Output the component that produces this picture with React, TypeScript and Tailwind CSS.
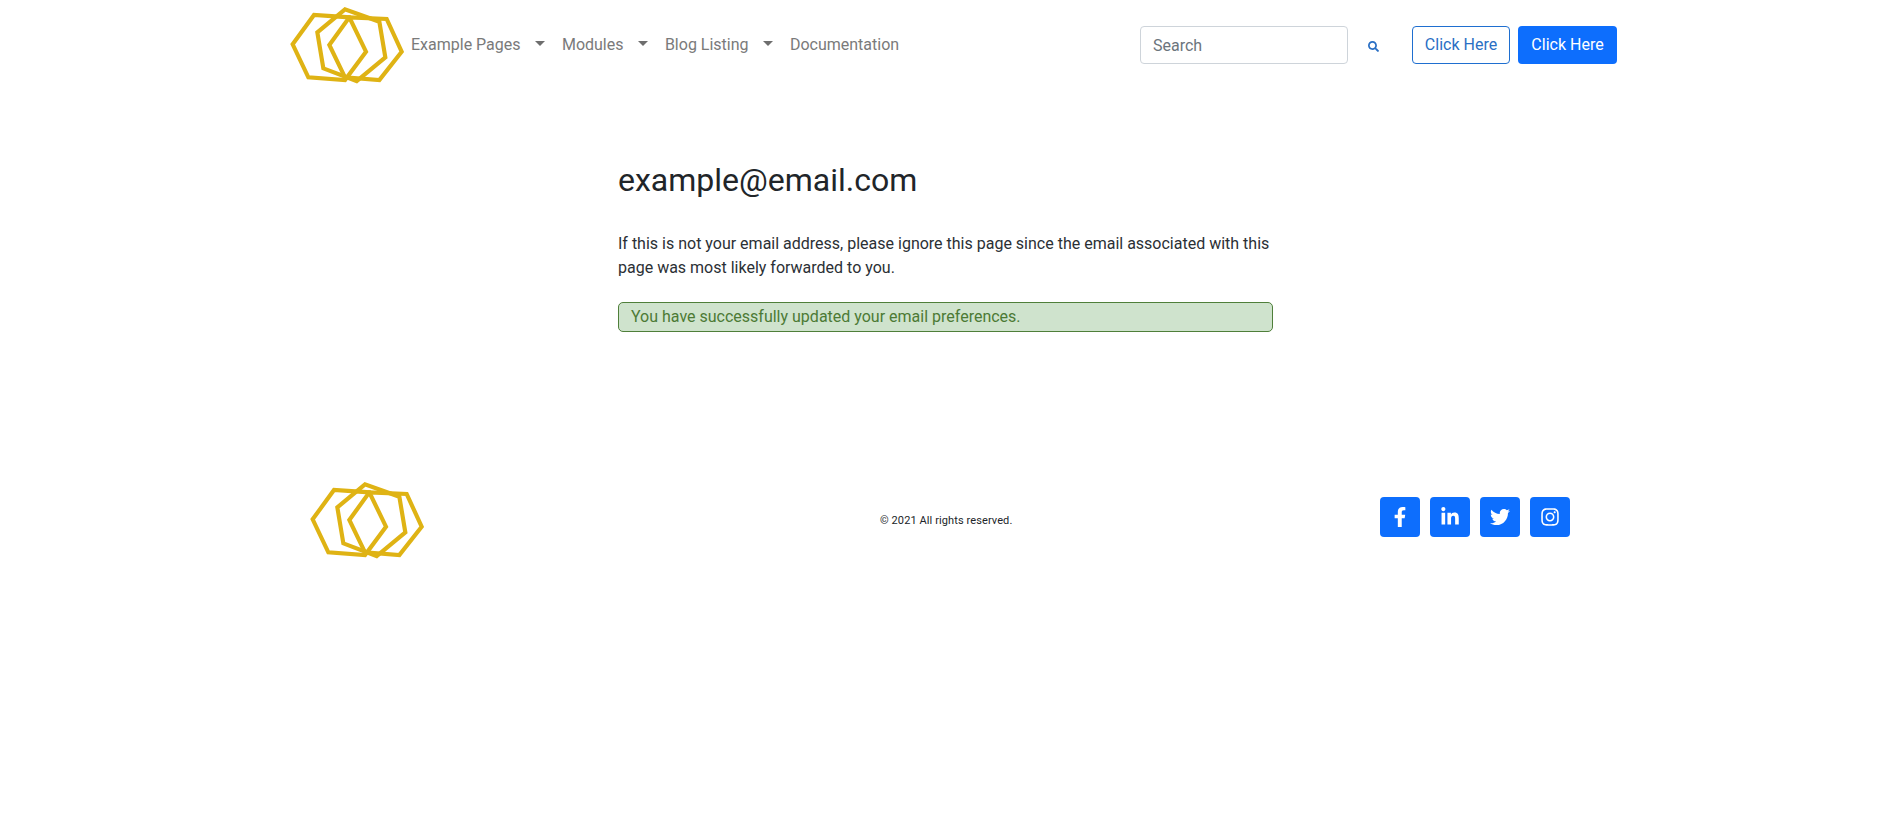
import { FaFacebookF, FaLinkedinIn, FaTwitter, FaInstagram, FaSearch } from 'react-icons/fa'

function Logo() {
  return (
    <svg width="130" height="90" viewBox="0 0 390 270" fill="none" stroke="#dfb314" strokeWidth="12.5" strokeLinejoin="miter" className="shrink-0">
      <polygon points="38,133 102,45 208,52 258,155 195,240 85,232" />
      <polygon points="112,97 195,28 298,65 316,172 230,243 130,205" />
      <polygon points="148,135 208,52 320,57 365,155 298,240 195,232" />
    </svg>
  )
}

function NavItem({ label, caret }: { label: string; caret?: boolean }) {
  return (
    <a href="#" className="flex items-center text-[16px] leading-6 text-[#7a7a7a]">
      {label}
      {caret && <span className="ml-[14px] mr-[17.4px] mb-[3px] w-0 h-0 border-x-[5px] border-x-transparent border-t-[5px] border-t-[#6e6e6e]" />}
    </a>
  )
}

const socials = [FaFacebookF, FaLinkedinIn, FaTwitter, FaInstagram]

export default function App() {
  return (
    <div className="min-h-[833px] bg-white text-[#212529] font-['Roboto',sans-serif]">
      <header className="flex items-center h-[90px] pl-[280px] pr-[277px]">
        <Logo />
        <nav className="flex items-center ml-px">
          <NavItem label="Example Pages" caret />
          <NavItem label="Modules" caret />
          <NavItem label="Blog Listing" caret />
          <NavItem label="Documentation" />
        </nav>
        <div className="ml-auto flex items-center">
          <input
            placeholder="Search"
            className="w-[208px] h-[38px] px-3 text-[16px] border border-[#ced4da] rounded bg-white placeholder:text-[#6c757d] outline-none"
          />
          <button className="w-[64px] h-[38px] flex items-center pl-[20px] text-[#2a6fc4]">
            <FaSearch className="w-[11px] h-[11px] mt-[2px]" />
          </button>
          <button className="w-[98px] h-[38px] border border-[#1f6fd0] rounded text-[16px] text-[#2a6fc4] bg-white">Click Here</button>
          <button className="w-[99px] h-[38px] ml-2 rounded text-[16px] text-white bg-[#0d6efd]">Click Here</button>
        </div>
      </header>

      <main className="w-[655px] ml-[618px] pt-[71px] h-[385px]">
        <h1 className="text-[32px] leading-[38px] font-normal">example@email.com</h1>
        <p className="mt-[33px] text-[16px] leading-6 text-[#2b3035]">
          If this is not your email address, please ignore this page since the email associated with this page was most likely forwarded to you.
        </p>
        <div className="mt-[22px] h-[30px] px-3 flex items-center text-[16px] text-[#4c7a35] bg-[#cfe3cd] border border-[#4f7f3a] rounded-[5px]">
          You have successfully updated your email preferences.
        </div>
      </main>

      <footer className="flex items-start pl-[300px]">
        <Logo />
        <p className="ml-[450px] mt-[38px] w-[140px] text-[11px] leading-[15px] tracking-[0.1px] text-[#212529] whitespace-nowrap">© 2021 All rights reserved.</p>
        <div className="ml-[360px] mt-[22px] flex gap-[10px]">
          {socials.map((Icon, i) => (
            <a key={i} href="#" className="w-10 h-10 rounded flex items-center justify-center bg-[#0d6efd] text-white">
              <Icon className="w-5 h-5" />
            </a>
          ))}
        </div>
      </footer>
    </div>
  )
}
